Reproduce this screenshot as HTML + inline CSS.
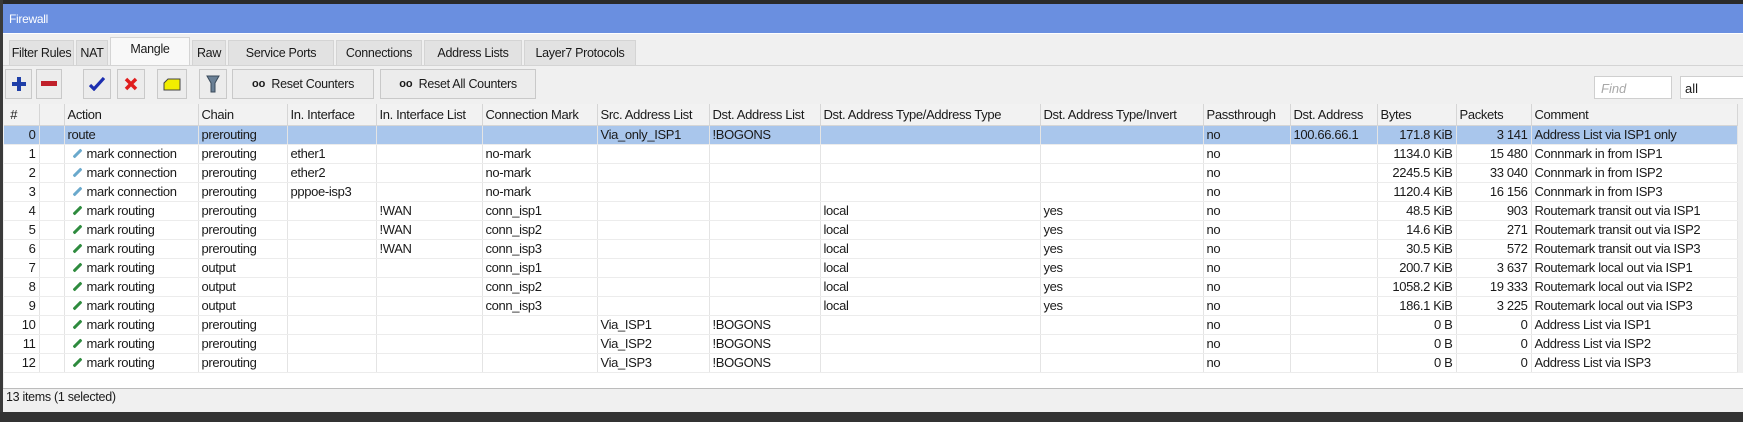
<!DOCTYPE html>
<html><head><meta charset="utf-8">
<style>
*{margin:0;padding:0;box-sizing:border-box}
body{width:1743px;height:422px;background:#f0f0f0;font-family:"Liberation Sans",Arial,sans-serif;font-size:13px;color:#1a1a1a;position:relative;overflow:hidden}
.abs{position:absolute}
#top{left:0;top:0;width:1743px;height:4px;background:#2a2a2a}
#lb{left:0;top:0;width:3px;height:422px;background:#3a3a3a}
#bot{left:0;top:412px;width:1743px;height:10px;background:#333}
#title{left:3px;top:4px;width:1740px;height:29px;background:#6a8fe0;color:#fff;font-size:12px;padding:8px 0 0 6px;letter-spacing:-0.3px}
.tab{top:40px;height:25px;background:#e2e2e2;border:1px solid #d4d4d4;border-bottom:none;padding-top:5px;text-align:center;font-size:12.5px;letter-spacing:-0.3px}
.tab.on{background:#f8f8f8;top:37px;height:29px;padding-top:4px}
.btn{top:69px;height:30px;border:1px solid #c9c9c9;background:#ececec;display:flex;align-items:center;justify-content:center;font-size:12.5px;letter-spacing:-0.3px}
.btn b{font-size:11px;margin-right:6px;letter-spacing:0}
table{position:absolute;left:4px;top:104px;border-collapse:collapse;table-layout:fixed;width:1733px}
td{height:19px;border-right:1px solid #e4e4e4;border-bottom:1px solid #ececec;white-space:nowrap;overflow:hidden;padding:0 3px;font-size:13px;letter-spacing:-0.35px;background:#fff}
tr.h td{height:21px;background:#f2f2f2;border-right:1px solid #d6d6d6;border-bottom:1px solid #d6d6d6}
tr.s td{background:#a9c6ec}
.r{text-align:right}
.pc,.pr{display:inline-block;width:11px;height:3px;transform:rotate(-45deg);margin:0 4px 3px 4px;border-radius:1px}
.pc{background:#6aa9cc}
.pr{background:#2e8b3e}
</style></head><body>
<div class="abs" id="top"></div>
<div class="abs" id="lb"></div>
<div class="abs" id="title">Firewall</div>
<div class="abs" style="left:3px;top:33px;width:1740px;height:1px;background:#fff"></div>
<div class="abs tab" style="left:9px;width:65px">Filter Rules</div>
<div class="abs tab" style="left:76px;width:32px">NAT</div>
<div class="abs tab on" style="left:110px;width:80px">Mangle</div>
<div class="abs tab" style="left:192px;width:34px">Raw</div>
<div class="abs tab" style="left:228px;width:106px">Service Ports</div>
<div class="abs tab" style="left:336px;width:86px">Connections</div>
<div class="abs tab" style="left:424px;width:98px">Address Lists</div>
<div class="abs tab" style="left:524px;width:112px">Layer7 Protocols</div>
<div class="abs" style="left:3px;top:65px;width:1740px;height:1px;background:#d4d4d4"></div>

<div class="abs btn" style="left:5px;width:27px"><svg width="16" height="16"><path d="M6 1h4v5h5v4h-5v5h-4v-5h-5v-4h5z" fill="#1f3fa8"/></svg></div>
<div class="abs btn" style="left:36px;width:26px"><svg width="16" height="6"><rect width="16" height="5" fill="#c0202a"/></svg></div>
<div class="abs btn" style="left:83px;width:28px"><svg width="16" height="14"><path d="M1 8l4 4 10-11" stroke="#1d2fb0" stroke-width="3.2" fill="none"/></svg></div>
<div class="abs btn" style="left:117px;width:28px"><svg width="14" height="14"><path d="M2 2l10 10M12 2l-10 10" stroke="#e01e1e" stroke-width="3.5"/></svg></div>
<div class="abs btn" style="left:157px;width:30px"><svg width="18" height="13"><path d="M5 1h12v11H1V5z" fill="#f2ee00" stroke="#444" stroke-width="1"/></svg></div>
<div class="abs btn" style="left:199px;width:28px"><svg width="14" height="18"><path d="M1 1h12l-4 7v9h-4V8z" fill="#6a8096" stroke="#3a4a5a"/></svg></div>
<div class="abs btn" style="left:232px;width:142px"><b>oo</b>Reset Counters</div>
<div class="abs btn" style="left:380px;width:156px"><b>oo</b>Reset All Counters</div>
<div class="abs" style="left:1594px;top:76px;width:78px;height:23px;background:#fff;border:1px solid #cfcfcf;color:#a8a8a8;font-style:italic;padding:4px 0 0 6px">Find</div>
<div class="abs" style="left:1680px;top:76px;width:70px;height:23px;background:#fff;border:1px solid #cfcfcf;padding:4px 0 0 4px">all</div>

<table>
<colgroup><col style="width:35px"><col style="width:25px"><col style="width:134px"><col style="width:89px"><col style="width:89px"><col style="width:106px"><col style="width:115px"><col style="width:112px"><col style="width:111px"><col style="width:220px"><col style="width:163px"><col style="width:87px"><col style="width:87px"><col style="width:79px"><col style="width:75px"><col style="width:206px"></colgroup>
<tr class="h"><td>&nbsp;#</td><td></td><td>Action</td><td>Chain</td><td>In. Interface</td><td>In. Interface List</td><td>Connection Mark</td><td>Src. Address List</td><td>Dst. Address List</td><td>Dst. Address Type/Address Type</td><td>Dst. Address Type/Invert</td><td>Passthrough</td><td>Dst. Address</td><td>Bytes</td><td>Packets</td><td>Comment</td></tr>
<tr class="s"><td class="r">0</td><td></td><td>route</td><td>prerouting</td><td></td><td></td><td></td><td>Via_only_ISP1</td><td>!BOGONS</td><td></td><td></td><td>no</td><td>100.66.66.1</td><td class="r">171.8 KiB</td><td class="r">3 141</td><td>Address List via ISP1 only</td></tr>
<tr><td class="r">1</td><td></td><td><i class="pc"></i>mark connection</td><td>prerouting</td><td>ether1</td><td></td><td>no-mark</td><td></td><td></td><td></td><td></td><td>no</td><td></td><td class="r">1134.0 KiB</td><td class="r">15 480</td><td>Connmark in from ISP1</td></tr>
<tr><td class="r">2</td><td></td><td><i class="pc"></i>mark connection</td><td>prerouting</td><td>ether2</td><td></td><td>no-mark</td><td></td><td></td><td></td><td></td><td>no</td><td></td><td class="r">2245.5 KiB</td><td class="r">33 040</td><td>Connmark in from ISP2</td></tr>
<tr><td class="r">3</td><td></td><td><i class="pc"></i>mark connection</td><td>prerouting</td><td>pppoe-isp3</td><td></td><td>no-mark</td><td></td><td></td><td></td><td></td><td>no</td><td></td><td class="r">1120.4 KiB</td><td class="r">16 156</td><td>Connmark in from ISP3</td></tr>
<tr><td class="r">4</td><td></td><td><i class="pr"></i>mark routing</td><td>prerouting</td><td></td><td>!WAN</td><td>conn_isp1</td><td></td><td></td><td>local</td><td>yes</td><td>no</td><td></td><td class="r">48.5 KiB</td><td class="r">903</td><td>Routemark transit out via ISP1</td></tr>
<tr><td class="r">5</td><td></td><td><i class="pr"></i>mark routing</td><td>prerouting</td><td></td><td>!WAN</td><td>conn_isp2</td><td></td><td></td><td>local</td><td>yes</td><td>no</td><td></td><td class="r">14.6 KiB</td><td class="r">271</td><td>Routemark transit out via ISP2</td></tr>
<tr><td class="r">6</td><td></td><td><i class="pr"></i>mark routing</td><td>prerouting</td><td></td><td>!WAN</td><td>conn_isp3</td><td></td><td></td><td>local</td><td>yes</td><td>no</td><td></td><td class="r">30.5 KiB</td><td class="r">572</td><td>Routemark transit out via ISP3</td></tr>
<tr><td class="r">7</td><td></td><td><i class="pr"></i>mark routing</td><td>output</td><td></td><td></td><td>conn_isp1</td><td></td><td></td><td>local</td><td>yes</td><td>no</td><td></td><td class="r">200.7 KiB</td><td class="r">3 637</td><td>Routemark local out via ISP1</td></tr>
<tr><td class="r">8</td><td></td><td><i class="pr"></i>mark routing</td><td>output</td><td></td><td></td><td>conn_isp2</td><td></td><td></td><td>local</td><td>yes</td><td>no</td><td></td><td class="r">1058.2 KiB</td><td class="r">19 333</td><td>Routemark local out via ISP2</td></tr>
<tr><td class="r">9</td><td></td><td><i class="pr"></i>mark routing</td><td>output</td><td></td><td></td><td>conn_isp3</td><td></td><td></td><td>local</td><td>yes</td><td>no</td><td></td><td class="r">186.1 KiB</td><td class="r">3 225</td><td>Routemark local out via ISP3</td></tr>
<tr><td class="r">10</td><td></td><td><i class="pr"></i>mark routing</td><td>prerouting</td><td></td><td></td><td></td><td>Via_ISP1</td><td>!BOGONS</td><td></td><td></td><td>no</td><td></td><td class="r">0 B</td><td class="r">0</td><td>Address List via ISP1</td></tr>
<tr><td class="r">11</td><td></td><td><i class="pr"></i>mark routing</td><td>prerouting</td><td></td><td></td><td></td><td>Via_ISP2</td><td>!BOGONS</td><td></td><td></td><td>no</td><td></td><td class="r">0 B</td><td class="r">0</td><td>Address List via ISP2</td></tr>
<tr><td class="r">12</td><td></td><td><i class="pr"></i>mark routing</td><td>prerouting</td><td></td><td></td><td></td><td>Via_ISP3</td><td>!BOGONS</td><td></td><td></td><td>no</td><td></td><td class="r">0 B</td><td class="r">0</td><td>Address List via ISP3</td></tr>
</table>
<div class="abs" style="left:4px;top:373px;width:1739px;height:15px;background:#fff"></div>
<div class="abs" style="left:3px;top:388px;width:1740px;height:1px;background:#bcbcbc"></div>
<div class="abs" style="left:6px;top:390px;font-size:12.5px;letter-spacing:-0.3px">13 items (1 selected)</div>
<div class="abs" id="bot"></div>
</body></html>
